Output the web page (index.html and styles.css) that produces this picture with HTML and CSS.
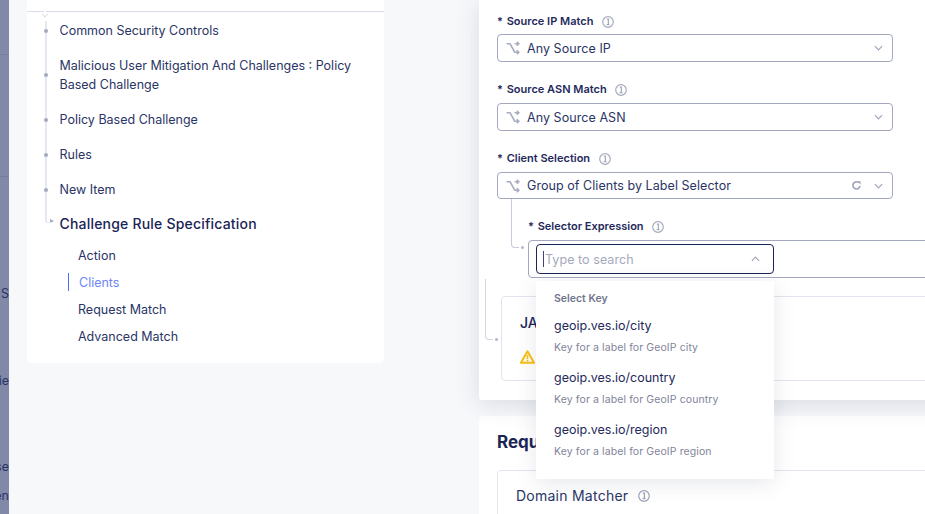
FILE: index.html
```html
<!DOCTYPE html>
<html lang="en">
<head>
<meta charset="utf-8">
<title>Client selection</title>
<link rel="stylesheet" href="styles.css">
</head>
<body>
<svg class="defs" width="0" height="0" aria-hidden="true">
  <symbol id="shuffle" viewBox="0 0 14 14"><path d="M0.5 2.8h3.6l4.6 8.4h3.8M8.6 2.8h4M10.8 0.8l2 2-2 2M10.8 9.2l2 2-2 2" fill="none" stroke="currentColor" stroke-width="1.6"/></symbol>
  <symbol id="chev" viewBox="0 0 10 6"><path d="M1 1l4 4 4-4" fill="none" stroke="currentColor" stroke-width="1.3"/></symbol>
  <symbol id="info" viewBox="0 0 12 12"><circle cx="6" cy="6" r="5.3" fill="none" stroke="currentColor" stroke-width="1.2"/><path d="M4.8 3.2H6.4V8.2M4.6 8.6H7.6" fill="none" stroke="currentColor" stroke-width="1.3"/></symbol>
</svg>
<div class="page">
  <aside class="rail">
    <span class="rail-a">S</span>
    <span class="rail-b">cie</span>
    <span class="rail-c">se</span>
    <span class="rail-d">en</span>
  </aside>

  <nav class="outline">
    <div class="outline-top"><span class="notch"></span></div>
    <div class="tree">
      <div class="crumb">Common Security Controls</div>
      <div class="crumb">Malicious User Mitigation And Challenges : Policy Based Challenge</div>
      <div class="crumb">Policy Based Challenge</div>
      <div class="crumb">Rules</div>
      <div class="crumb">New Item</div>
      <div class="crumb current">Challenge Rule Specification</div>
    </div>
    <ul class="sub">
      <li>Action</li>
      <li class="active">Clients</li>
      <li>Request Match</li>
      <li>Advanced Match</li>
    </ul>
  </nav>

  <main class="content">
    <section class="card first">
      <div class="field-label"><b>*</b> Source IP Match <svg class="info"><use href="#info"/></svg></div>
      <div class="select top"><svg class="shuffle"><use href="#shuffle"/></svg><span class="value">Any Source IP</span><svg class="chev"><use href="#chev"/></svg></div>

      <div class="field-label gap"><b>*</b> Source ASN Match <svg class="info"><use href="#info"/></svg></div>
      <div class="select"><svg class="shuffle"><use href="#shuffle"/></svg><span class="value">Any Source ASN</span><svg class="chev"><use href="#chev"/></svg></div>

      <div class="field-label gap"><b>*</b> Client Selection <svg class="info"><use href="#info"/></svg></div>
      <div class="select short"><svg class="shuffle"><use href="#shuffle"/></svg><span class="value">Group of Clients by Label Selector</span>
        <svg class="refresh" viewBox="0 0 12 12"><path d="M9.8 6.4A3.9 3.9 0 1 1 8.6 3" fill="none" stroke="currentColor" stroke-width="1.8"/><path d="M7 1.4h3.4v3.4z" fill="currentColor"/></svg>
        <svg class="chev"><use href="#chev"/></svg></div>

      <div class="nested">
        <span class="link link-one"></span>
        <div class="field-label"><b>*</b> Selector Expression <svg class="info"><use href="#info"/></svg></div>
        <div class="expr">
          <div class="search"><span class="caret"></span><span class="ph">Type to search</span><svg class="chev up"><use href="#chev"/></svg></div>
        </div>
      </div>

      <div class="ja">
        <span class="link link-two"></span>
        <div class="ja-title">JA4 TLS</div>
        <svg class="warn" viewBox="0 0 16 15"><path d="M8 1.4L15 13.6H1z" fill="none" stroke="#fbbf12" stroke-width="2.2" stroke-linejoin="round"/><path d="M8 5.4v4.4M8 10.8v1.4" stroke="#fbbf12" stroke-width="1.8"/></svg>
      </div>
    </section>

    <section class="card second">
      <h2>Request</h2>
      <div class="matcher">Domain Matcher <svg class="info wide"><use href="#info"/></svg></div>
    </section>

    <div class="menu">
      <div class="menu-title">Select Key</div>
      <div class="opt"><div class="opt-key">geoip.ves.io/city</div><div class="opt-desc">Key for a label for GeoIP city</div></div>
      <div class="opt"><div class="opt-key">geoip.ves.io/country</div><div class="opt-desc">Key for a label for GeoIP country</div></div>
      <div class="opt"><div class="opt-key">geoip.ves.io/region</div><div class="opt-desc">Key for a label for GeoIP region</div></div>
    </div>
  </main>
</div>
</body>
</html>
```
FILE: styles.css
```css
* { box-sizing: border-box; }
html, body { margin: 0; height: 514px; overflow: hidden; }
body { background: #f7f8fa; font-family: Inter, "Liberation Sans", sans-serif; color: #1f2a5c; }
.defs { position: absolute; }
.page { display: flex; height: 514px; align-items: flex-start; }

.rail { flex: 0 0 9px; height: 514px; background: #8288a8; display: flex; flex-direction: column; align-items: flex-end; overflow: hidden; font-size: 12.5px; line-height: 17px; color: #2a3566; white-space: nowrap; position: relative; }
.rail::before, .rail::after { content: ""; position: absolute; left: 0; right: 0; height: 1px; background: #777d9e; }
.rail::before { top: 54px; }
.rail::after { top: 176px; }
.rail-a { margin-top: 285px; }
.rail-b { margin-top: 70px; }
.rail-c { margin-top: 69px; }
.rail-d { margin-top: 12px; }

.outline { flex: 0 0 357px; margin-left: 18px; height: 363px; background: #fff; border-radius: 0 0 5px 5px; }
.outline-top { height: 12px; border-bottom: 1px solid #d9dce8; position: relative; }
.notch { position: absolute; left: 15px; top: 11px; width: 6px; height: 6px; background: #fff; border-right: 1px solid #d9dce8; border-bottom: 1px solid #d9dce8; transform: rotate(45deg) scale(.8); }
.tree { margin: 9px 0 0 18px; padding-left: 14.5px; display: flex; flex-direction: column; gap: 16px; position: relative; }
.tree::before { content: ""; position: absolute; left: 0; top: 0; bottom: 11px; width: 2px; background: #e5e7f1; }
.crumb { font-size: 12.5px; line-height: 19px; position: relative; color: #2a3566; width: 310px; }
.crumb::before { content: ""; position: absolute; left: -15.5px; top: 50%; width: 4px; height: 4px; margin-top: -2px; border-radius: 50%; background: #a4a9bf; }
.crumb.current { margin-top: -1px; font-size: 14px; font-weight: 500; color: #1a2455; letter-spacing: .2px; }
.crumb.current::before { left: -9.5px; border-radius: 0; width: 0; height: 0; background: none; border-left: 4px solid #a4a9bf; border-top: 2.5px solid transparent; border-bottom: 2.5px solid transparent; margin-top: -5px; }
.crumb.current::after { content: ""; position: absolute; left: -14.5px; top: -2px; width: 5px; height: 10px; border-left: 2px solid #e5e7f1; border-bottom: 1px solid #e5e7f1; border-radius: 0 0 0 2px; }
.sub { list-style: none; margin: 9px 0 0 41px; padding: 0; }
.sub li { height: 27px; line-height: 27px; font-size: 12.5px; padding-left: 10px; color: #2a3566; position: relative; }
.sub li.active { color: #6d86f5; padding-left: 11px; }
.sub li.active::before { content: ""; position: absolute; left: 0; top: 4px; height: 18px; width: 1px; background: #4f6ef7; }

.content { flex: 0 0 546px; margin-left: 95px; position: relative; height: 514px; }
.card { background: #fff; overflow: hidden; }
.first { height: 400px; padding: 14px 0 0 18px; box-shadow: 0 4px 24px rgba(60, 70, 110, .16); border-radius: 0 0 0 3px; position: relative; }
.second { margin-top: 16px; height: 120px; padding: 16px 0 0 18px; border-radius: 4px 0 0 0; }

.field-label { font-size: 11px; font-weight: 600; line-height: 15px; color: #1f2a5c; display: flex; align-items: center; white-space: pre; height: 15px; }
.field-label b { font-weight: 600; margin-right: 1px; }
.gap { margin-top: 20px; }
.info { width: 12px; height: 12px; margin-left: 6px; color: #a7abbe; }
.info.wide { margin-left: 10px; }

.select { width: 396px; height: 28px; margin-top: 6px; border: 1px solid #a3a8bf; border-radius: 4px; display: flex; align-items: center; padding: 0 9px 0 8px; }
.select.top { margin-top: 5px; }
.select.short { height: 27px; }
.shuffle { width: 14px; height: 14px; color: #a8adc0; flex: none; }
.value { margin-left: 7px; font-size: 12.5px; color: #2a3566; letter-spacing: .06px; flex: 1; }
.chev { width: 9px; height: 6px; color: #a0a5ba; flex: none; }
.refresh { width: 11px; height: 11px; color: #a0a5ba; margin-right: 12px; flex: none; }

.nested { margin: 20px 0 0 31px; position: relative; }
.link { position: absolute; border-left: 1px solid #c6cada; border-bottom: 1px solid #c6cada; border-radius: 0 0 0 4px; }
.link::after { content: ""; position: absolute; right: -5px; bottom: -2px; width: 3px; height: 3px; border-radius: 50%; background: #b2b7ca; }
.link-one { left: -17px; top: -20px; width: 8px; height: 49px; }
.expr { width: 430px; height: 38px; margin-top: 6px; border: 1px solid #a3a8bf; border-radius: 4px 0 0 4px; padding: 3px 7px; }
.search { width: 238px; height: 30px; border: 1px solid #1a2455; border-radius: 4px; display: flex; align-items: center; padding: 0 13px 0 6px; }
.caret { width: 1px; height: 16px; background: #3a4570; margin-right: 1px; }
.ph { flex: 1; font-size: 12.5px; color: #a5a9bc; letter-spacing: .06px; }
.chev.up { transform: rotate(180deg); }

.ja { margin: 18px 0 0 4px; width: 440px; height: 85px; border: 1px solid #e3e5ee; border-radius: 4px 0 0 4px; padding: 17px 0 0 18px; position: relative; }
.link-two { left: -17px; top: -18px; width: 8px; height: 61px; border-color: #d4d7e3; }
.ja-title { font-size: 14px; font-weight: 500; line-height: 18px; color: #1a2455; }
.warn { display: block; width: 15px; height: 14px; margin-top: 18px; }

h2 { margin: 0; font-size: 17px; font-weight: 700; line-height: 21px; color: #1a2455; }
.matcher { margin-top: 17px; width: 440px; height: 60px; border: 1px solid #e3e5ee; border-radius: 4px 0 0 0; padding: 15px 0 0 18px; font-size: 14px; line-height: 20px; letter-spacing: .25px; color: #2a3566; display: flex; align-items: flex-start; }
.matcher .info { margin-top: 4px; color: #9ea3b8; }

.menu { position: absolute; left: 57px; top: 281px; width: 238px; height: 198px; background: #fff; box-shadow: 0 4px 20px rgba(60, 70, 110, .13); padding: 11px 18px 0; }
.menu-title { font-size: 10.5px; font-weight: 600; line-height: 13px; color: #71768f; }
.opt { height: 52px; }
.menu-title + .opt { margin-top: 12px; }
.opt-key { font-size: 12.5px; line-height: 18px; color: #1f2a5c; }
.opt-desc { font-size: 10.5px; line-height: 14px; margin-top: 6px; color: #7f849a; letter-spacing: .1px; }
```
